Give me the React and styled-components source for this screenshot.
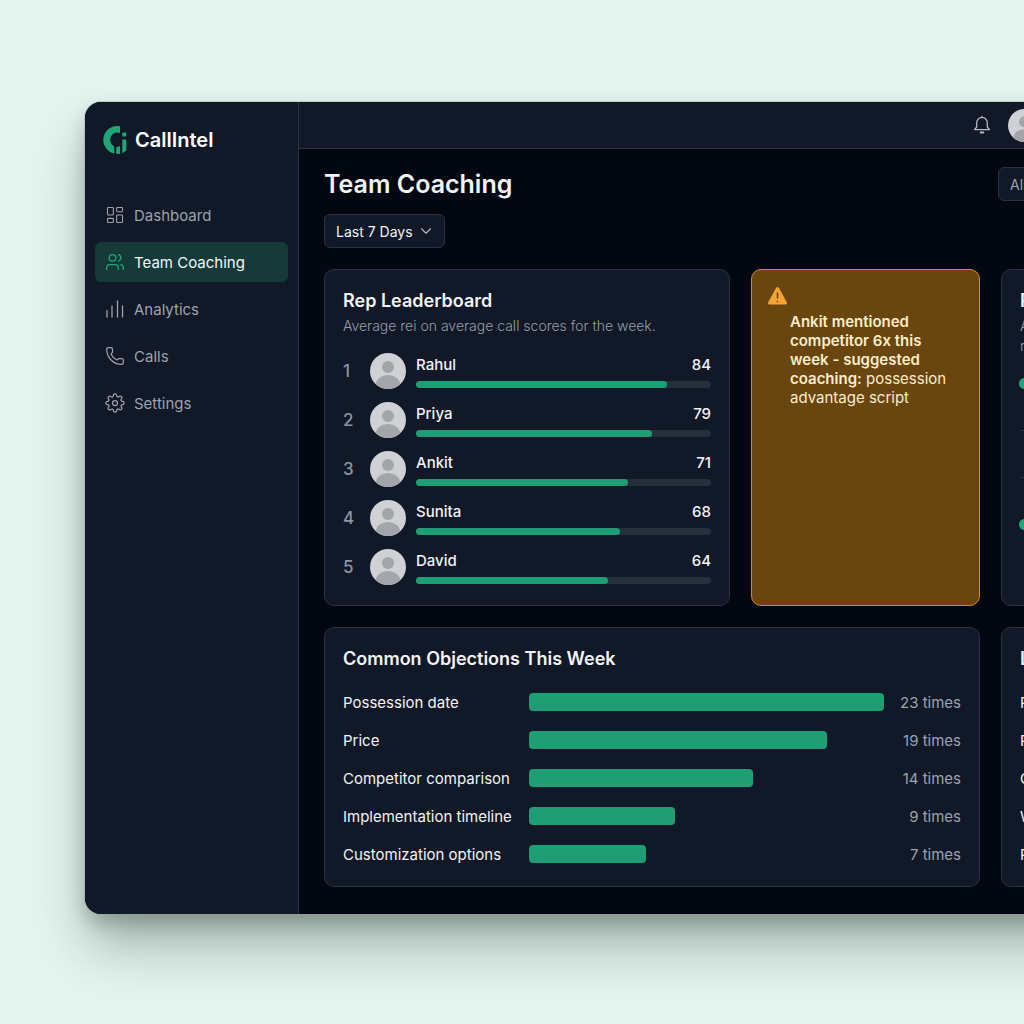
import styled, { createGlobalStyle } from "styled-components";
import { ChevronDown, LayoutDashboard, Phone, Users } from "lucide-react";
import { FiSettings } from "react-icons/fi";

const GlobalStyle = createGlobalStyle`
  * {
    box-sizing: border-box;
  }
  body {
    margin: 0;
    background: #e3f3ed;
    color: #f1f3f6;
    font-family: Inter, "Liberation Sans", sans-serif;
    font-size: 15px;
  }
  h1, h2, p, ul, ol {
    margin: 0;
    padding: 0;
  }
  ul, ol {
    list-style: none;
  }
`;

const Stage = styled.div`
  min-height: 100vh;
  padding: 102px 0 110px 85px;
  overflow: hidden;
`;

const Window = styled.div`
  display: grid;
  grid-template-columns: 214px 1fr;
  margin-right: -240px;
  border-radius: 16px;
  overflow: hidden;
  background: #030712;
  box-shadow: 0 0 0 1px rgba(150, 168, 164, 0.4), 0 34px 52px -4px rgba(20, 35, 32, 0.32),
    0 10px 20px -2px rgba(20, 35, 32, 0.26);
`;

const Sidebar = styled.aside`
  padding: 22px 10px;
  background: #111827;
  border-right: 1px solid #283344;
`;

const Brand = styled.a`
  display: flex;
  align-items: center;
  gap: 6px;
  height: 32px;
  padding-left: 8px;
  color: #fff;
  font-size: 20px;
  font-weight: 600;
  text-decoration: none;
`;

const Nav = styled.nav`
  display: grid;
  gap: 7px;
  margin-top: 39px;
`;

const NavLink = styled.a`
  display: flex;
  align-items: center;
  gap: 9px;
  height: 40px;
  padding: 0 10px;
  border-radius: 6px;
  background: ${(p) => (p.$active ? "#153a37" : "transparent")};
  color: ${(p) => (p.$active ? "#f3f6f7" : "#9ca3af")};
  text-decoration: none;

  svg {
    color: ${(p) => (p.$active ? "#22a678" : "#9ca3af")};
  }
`;

const Topbar = styled.header`
  display: flex;
  align-items: center;
  justify-content: flex-end;
  gap: 16px;
  height: 47px;
  padding-right: 24px;
  background: #111827;
  border-bottom: 1px solid #283344;
`;

const IconButton = styled.button`
  display: flex;
  padding: 0;
  border: 0;
  background: none;
  color: #b4bac4;
`;

const Account = styled.div`
  display: flex;
  width: 232px;
`;

const Content = styled.main`
  padding: 18px 25px 27px;
`;

const PageHead = styled.div`
  display: flex;
  justify-content: space-between;
  align-items: flex-start;
`;

const PageTitle = styled.h1`
  font-size: 25px;
  font-weight: 600;
  line-height: 34px;
`;

const SelectBox = styled.span`
  display: grid;
  align-items: center;
  width: ${(p) => p.$width};
  height: 34px;
  border: 1px solid #283344;
  border-radius: 6px;
  background: #111827;

  select,
  svg {
    grid-area: 1 / 1;
  }
  svg {
    justify-self: end;
    margin-right: 9px;
    color: #b4bac4;
    pointer-events: none;
  }
`;

const Select = styled.select`
  appearance: none;
  width: 100%;
  height: 32px;
  padding: 0 11px;
  border: 0;
  background: none;
  color: ${(p) => (p.$muted ? "#9ca3af" : "#f1f3f6")};
  font: inherit;
  font-size: 14px;
`;

const Filters = styled.div`
  margin-top: 13px;
`;

const Cards = styled.div`
  display: grid;
  grid-template-columns: 406fr 229fr 238fr;
  gap: 21px;
  margin-top: 21px;
`;

const Card = styled.section`
  grid-column: span ${(p) => p.$span || 1};
  padding: 18px 18px 13px;
  border: 1px solid #283344;
  border-radius: 10px;
  background: #111827;
`;

const CardTitle = styled.h2`
  font-size: 18px;
  font-weight: 600;
  line-height: 26px;
`;

const Muted = styled.p`
  margin-top: 2px;
  color: #979eaa;
  font-size: 14px;
  font-weight: 300;
  line-height: 20px;
`;

const Board = styled.ol`
  display: grid;
  gap: 13px;
  margin: 17px 0 7px;
`;

const Rep = styled.li`
  display: grid;
  grid-template-columns: 17px 36px 1fr;
  align-items: center;
  gap: 10px;
  height: 36px;
`;

const Rank = styled.span`
  color: #8d95a2;
  font-size: 17px;
  font-weight: 500;
`;

const RepLine = styled.div`
  display: flex;
  justify-content: space-between;
  font-size: 15px;
  font-weight: 500;
  line-height: 20px;
`;

const Track = styled.div`
  height: 7px;
  margin-top: 6px;
  border-radius: 4px;
  background: #272f3d;
`;

const Fill = styled.div`
  height: 100%;
  border-radius: 4px;
  background: #1f9e74;
`;

const Alert = styled.section`
  padding: 16px 15px;
  border: 1px solid #d4882a;
  border-radius: 10px;
  background: #69460f;

  svg {
    display: block;
  }
`;

const AlertText = styled.p`
  margin-top: 6px;
  padding: 0 10px 0 23px;
  color: #fbeccb;
  line-height: 19px;

  strong {
    font-weight: 600;
  }
`;

const Events = styled.ul`
  margin-top: 4px;
`;

const Event = styled.li`
  display: flex;
  align-items: center;
  height: 47px;
  margin-left: ${(p) => (p.$dot ? "-1px" : "0")};

  &::before {
    content: "";
    width: ${(p) => (p.$dot ? "11px" : "100%")};
    height: ${(p) => (p.$dot ? "11px" : "1px")};
    border-radius: ${(p) => (p.$dot ? "50%" : "0")};
    background: ${(p) => (p.$dot ? "#22a678" : "#283344")};
  }
`;

const Rows = styled.ul`
  margin-top: 11px;
`;

const Row = styled.li`
  display: flex;
  align-items: center;
  gap: 16px;
  height: 38px;
  white-space: nowrap;
`;

const RowLabel = styled.span`
  flex: 0 0 170px;
`;

const BarArea = styled.div`
  flex: 1;
`;

const Bar = styled.div`
  height: 18px;
  border-radius: 4px;
  background: #1f9e74;
`;

const Count = styled.span`
  flex: 0 0 61px;
  color: #9ca3af;
  text-align: right;
`;

const reps = [
  ["Rahul", 84, 85],
  ["Priya", 79, 80],
  ["Ankit", 71, 72],
  ["Sunita", 68, 69],
  ["David", 64, 65],
];

const objections = [
  ["Possession date", 23, 100],
  ["Price", 19, 84],
  ["Competitor comparison", 14, 63],
  ["Implementation timeline", 9, 41],
  ["Customization options", 7, 33],
];

const Logo = () => (
  <svg width="26" height="30" viewBox="0 0 26 30" aria-hidden="true">
    <g fill="#22a678">
      <path d="M17 1.300v6.700A7 7 0 0 0 7.300 15c0 2.700 1.400 5 4 6.400V28.400A13.700 13.700 0 0 1 17 1.300z" />
      <path d="M13.300 22.500l3.700-1.500v8l-3.700-.3zM19.300 14.500h4v11l-4 2.800z" />
      <circle cx="21.300" cy="9.500" r="2.200" />
    </g>
  </svg>
);

const BarsIcon = () => (
  <svg width="20" height="20" viewBox="0 0 20 20" stroke="currentColor" strokeWidth="1.300" strokeLinecap="round" aria-hidden="true">
    <path d="M2 11.500v6.500M7 7v11M12.500 2v16M17.500 7v11" />
  </svg>
);

const BellIcon = () => (
  <svg width="20" height="20" viewBox="0 0 20 20" fill="none" stroke="currentColor" strokeWidth="1.300" strokeLinecap="round" strokeLinejoin="round" aria-hidden="true">
    <path d="M10 1.500v1M4.700 12V7.700a5.300 5.300 0 0 1 10.600 0V12l2.200 2.600h-15z" />
    <path d="M8.700 17.500h2.600" strokeWidth="2" />
  </svg>
);

const Avatar = ({ size }) => (
  <svg width={size} height={size} viewBox="0 0 36 36" aria-hidden="true">
    <clipPath id={`face-${size}`}>
      <circle cx="18" cy="18" r="18" />
    </clipPath>
    <g clipPath={`url(#face-${size})`}>
      <rect width="36" height="36" fill="#cfd1d5" />
      <circle cx="18" cy="14" r="6" fill="#a2a5aa" />
      <ellipse cx="18" cy="31" rx="12" ry="9" fill="#a2a5aa" />
    </g>
  </svg>
);

const Warning = () => (
  <svg width="21" height="20" viewBox="0 0 21 20" aria-hidden="true">
    <path d="M10.500 2.500L18.500 17h-16z" fill="#f5a335" stroke="#f5a335" strokeWidth="3" strokeLinejoin="round" />
    <path d="M10.500 7v5M10.500 15.500v.1" stroke="#69460f" strokeWidth="1.600" strokeLinecap="round" />
  </svg>
);

const App = () => (
  <Stage>
    <GlobalStyle />
    <Window>
      <Sidebar>
        <Brand href="#">
          <Logo />
          CallIntel
        </Brand>
        <Nav>
          <NavLink href="#"><LayoutDashboard size={20} strokeWidth={1.3} />Dashboard</NavLink>
          <NavLink href="#" $active><Users size={20} strokeWidth={1.5} />Team Coaching</NavLink>
          <NavLink href="#"><BarsIcon />Analytics</NavLink>
          <NavLink href="#"><Phone size={20} strokeWidth={1.5} />Calls</NavLink>
          <NavLink href="#"><FiSettings size={20} strokeWidth={1.5} />Settings</NavLink>
        </Nav>
      </Sidebar>
      <div>
        <Topbar>
          <IconButton aria-label="Notifications"><BellIcon /></IconButton>
          <Account><Avatar size={33} /></Account>
        </Topbar>
        <Content>
          <PageHead>
            <PageTitle>Team Coaching</PageTitle>
            <SelectBox $width="241px">
              <Select aria-label="Team" $muted><option>Ali</option></Select>
            </SelectBox>
          </PageHead>
          <Filters>
            <SelectBox $width="121px">
              <Select aria-label="Period"><option>Last 7 Days</option></Select>
              <ChevronDown size={18} strokeWidth={1.5} />
            </SelectBox>
          </Filters>
          <Cards>
            <Card>
              <CardTitle>Rep Leaderboard</CardTitle>
              <Muted>Average rei on average call scores for the week.</Muted>
              <Board>
                {reps.map(([name, score, width], i) => (
                  <Rep key={name}>
                    <Rank>{i + 1}</Rank>
                    <Avatar size={36} />
                    <div>
                      <RepLine><span>{name}</span><span>{score}</span></RepLine>
                      <Track><Fill style={{ width: `${width}%` }} /></Track>
                    </div>
                  </Rep>
                ))}
              </Board>
            </Card>
            <Alert>
              <Warning />
              <AlertText>
                <strong>Ankit mentioned competitor 6x this week - suggested coaching:</strong> possession advantage script
              </AlertText>
            </Alert>
            <Card>
              <CardTitle>R</CardTitle>
              <Muted>A<br />r</Muted>
              <Events>
                <Event $dot />
                <Event />
                <Event />
                <Event $dot />
              </Events>
            </Card>
            <Card $span={2}>
              <CardTitle>Common Objections This Week</CardTitle>
              <Rows>
                {objections.map(([label, count, width]) => (
                  <Row key={label}>
                    <RowLabel>{label}</RowLabel>
                    <BarArea><Bar style={{ width: `${width}%` }} /></BarArea>
                    <Count>{count} times</Count>
                  </Row>
                ))}
              </Rows>
            </Card>
            <Card>
              <CardTitle>L</CardTitle>
              <Rows>
                {["P", "P", "C", "W", "P"].map((label, i) => (
                  <Row key={i}>{label}</Row>
                ))}
              </Rows>
            </Card>
          </Cards>
        </Content>
      </div>
    </Window>
  </Stage>
);

export default App;
